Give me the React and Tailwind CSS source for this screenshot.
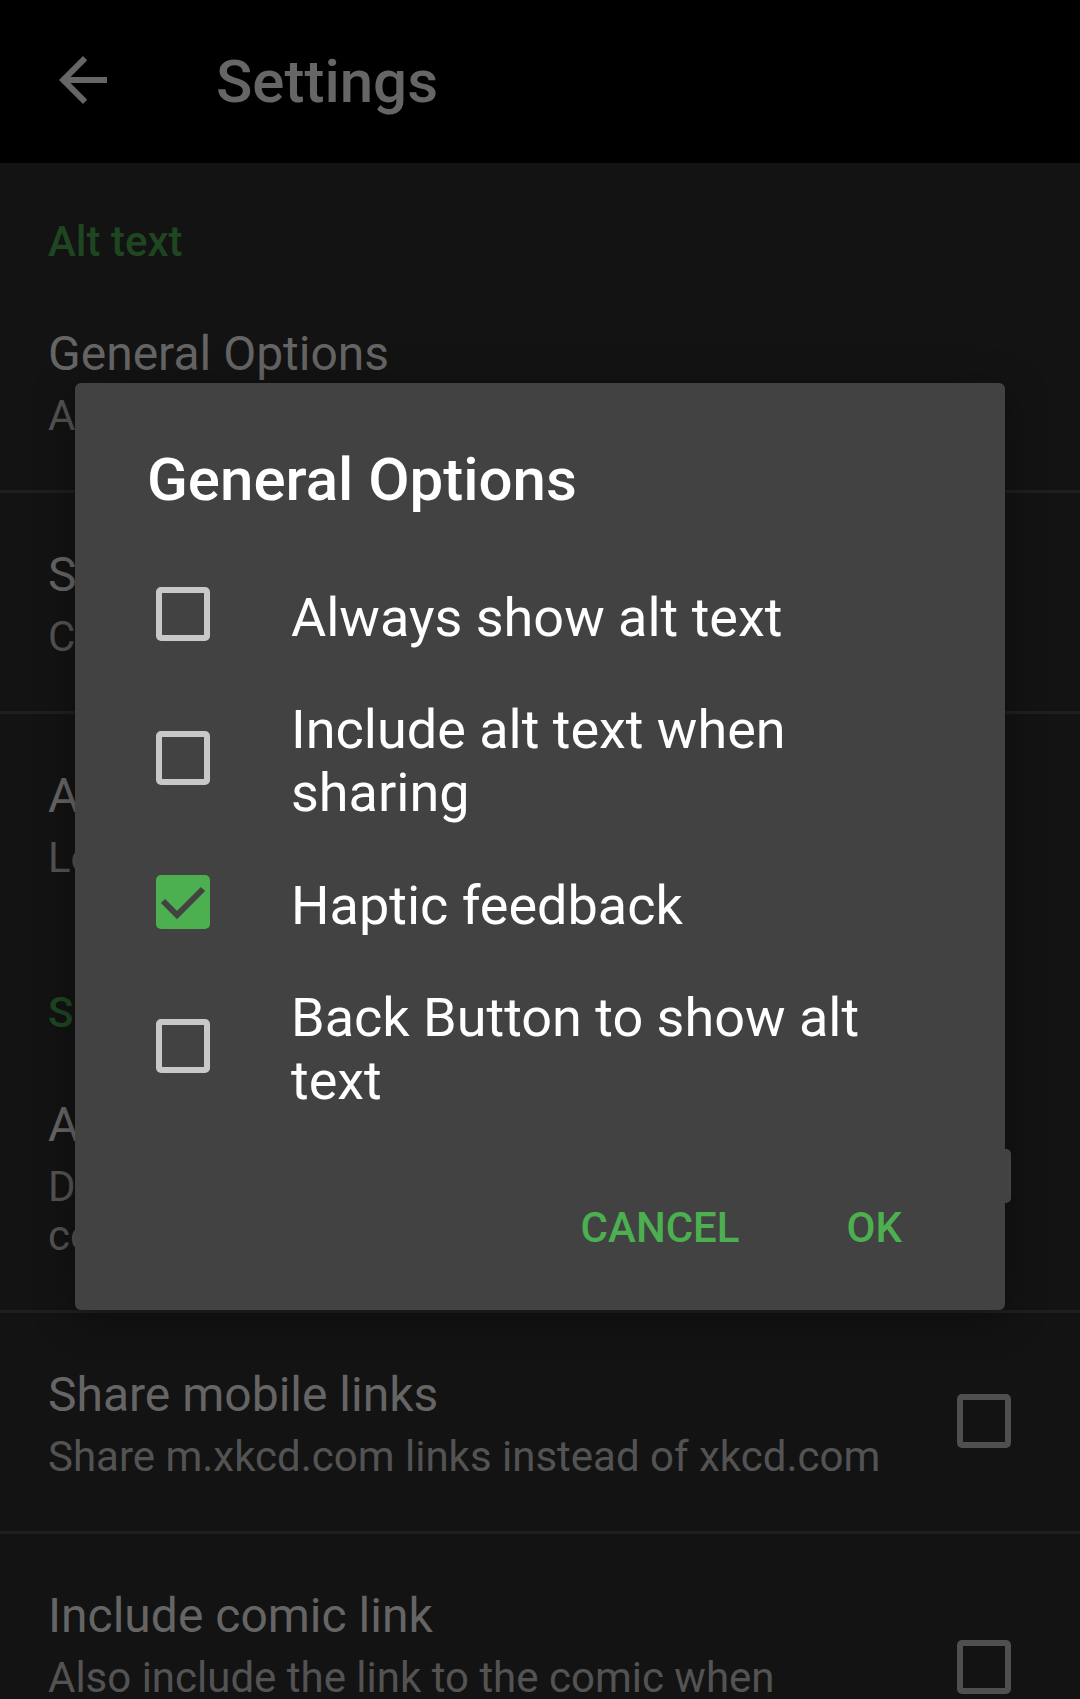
import React from 'react';

function BgCheckbox() {
    return <div className="w-[54px] h-[54px] shrink-0 rounded-[5px] border-[6px] border-[#4f4f4f]" />;
}

function Category({ label }) {
    return (
        <div className="h-[109px] pl-[48px] pt-[54px] text-[42px] leading-[49px] font-medium text-[#1e4620]">{label}</div>
    );
}

function Pref({ title, summary, checkbox, tight }) {
    return (
        <div className="flex items-center pl-[48px] pr-[69px]">
            <div className="flex-1 min-w-0 pt-[54px] pb-[50px]">
                <div className="text-[48px] leading-[56px] text-[#656565] whitespace-nowrap">{title}</div>
                <div className={tight ? 'mt-[9px] text-[42px] leading-[49px] text-[#535353] tracking-[-0.15px]' : 'mt-[9px] text-[42px] leading-[49px] text-[#535353]'}>
                    {summary.map((line, i) => (
                        <div key={i} className="whitespace-nowrap">{line}</div>
                    ))}
                </div>
            </div>
            {checkbox && <div className="ml-[48px] -mt-[2px]"><BgCheckbox /></div>}
        </div>
    );
}

const Divider = () => <div className="h-[3px] bg-[#1f1f1f]" />;

function DialogCheckbox({ checked }) {
    if (checked) {
        return (
            <div className="w-[54px] h-[54px] shrink-0 rounded-[5px] bg-[#4caf50]">
                <svg width="54" height="54" viewBox="0 0 54 54">
                    <polyline points="7,26 21,40 47,14" fill="none" stroke="#424242" strokeWidth="6" />
                </svg>
            </div>
        );
    }
    return <div className="w-[54px] h-[54px] shrink-0 rounded-[5px] border-[6px] border-[#c8c8c8]" />;
}

const options = [
    { label: 'Always show alt text', checked: false },
    { label: 'Include alt text when sharing', checked: false },
    { label: 'Haptic feedback', checked: true },
    { label: 'Back Button to show alt text', checked: false },
];

export default function App() {
    return (
        <div className="relative w-[1080px] h-[1699px] overflow-hidden bg-[#131313] font-[Roboto,sans-serif]">
            {/* toolbar */}
            <div className="h-[163px] bg-black flex items-center">
                <svg className="ml-[47px] -mt-[3px]" width="72" height="72" viewBox="0 0 24 24">
                    <path fill="#666666" d="M20 11H7.83l5.59-5.59L12 4l-8 8 8 8 1.41-1.41L7.83 13H20v-2z" />
                </svg>
                <div className="ml-[97px] text-[60px] leading-[70px] font-medium text-[#666666]">Settings</div>
            </div>

            {/* preferences, dimmed by the dialog scrim */}
            <Category label="Alt text" />
            <Pref title="General Options" summary={['Always show alt text, sharing, back, haptic feedback']} tight />
            <Divider />
            <Pref title="Size of alt text" summary={['Change the font size of the alt text']} />
            <Divider />
            <Pref title="Alt text gesture" summary={['Long press on the comic to show alt text']} />
            <div className="h-[2px]" />
            <Category label="Sharing" />
            <Pref
                title="Always share image"
                summary={["Don't ask whether to share the image or the", 'comic link when sharing']}
                checkbox
            />
            <Divider />
            <Pref title="Share mobile links" summary={['Share m.xkcd.com links instead of xkcd.com']} checkbox />
            <Divider />
            <Pref
                title="Include comic link"
                summary={['Also include the link to the comic when', 'sharing']}
                checkbox
            />

            {/* dialog */}
            <div className="absolute left-[75px] top-[383px] w-[930px] h-[927px] rounded-[6px] bg-[#424242] shadow-[0_8px_40px_rgba(0,0,0,0.35)]">
                <div className="pl-[72px] pt-[62px] text-[60px] leading-[70px] font-medium text-white">General Options</div>
                <div className="mt-[27px]">
                    {options.map((o) => (
                        <div key={o.label} className="h-[144px] flex items-center pl-[81px] pr-[72px]">
                            <DialogCheckbox checked={o.checked} />
                            <div className="ml-[81px] mt-[6px] text-[54px] leading-[63px] text-white">{o.label}</div>
                        </div>
                    ))}
                </div>
                <div className="mt-[85px] flex justify-end gap-[107px] pr-[103px] text-[42px] leading-[49px] font-medium text-[#4caf50]">
                    <span>CANCEL</span>
                    <span>OK</span>
                </div>
            </div>
        </div>
    );
}
